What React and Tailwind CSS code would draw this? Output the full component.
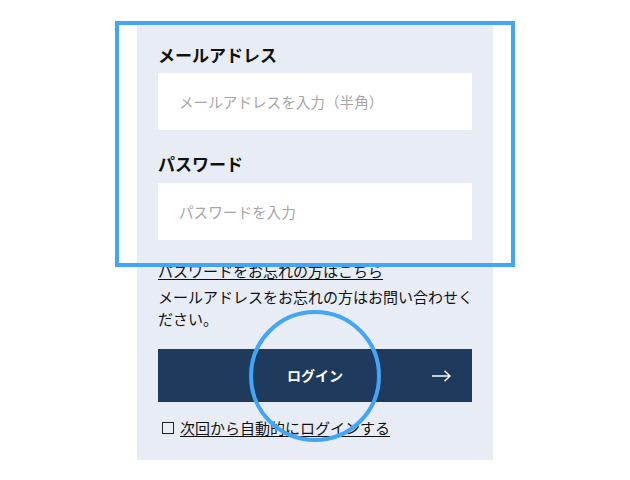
import React from "react";

export default function App() {
  const font = { fontFamily: '"Noto Sans CJK JP", "Noto Sans", sans-serif' };
  return (
    <div className="relative w-[630px] h-[480px] bg-white overflow-hidden text-[#111]" style={font}>
      <div className="ml-[137px] mt-[21px] w-[356px] h-[439px] bg-[#e8ecf5] px-[21px] pt-[22px] flex flex-col">
        <div className="text-[17px] leading-[24px] font-bold">メールアドレス</div>
        <div className="mt-[6px] h-[57px] bg-white flex items-center px-[21px] text-[14.6px] text-[#a6a6a6]">
          メールアドレスを入力（半角）
        </div>
        <div className="mt-[22px] text-[17px] leading-[24px] font-bold">パスワード</div>
        <div className="mt-[7px] h-[57px] bg-white flex items-center px-[21px] text-[14.6px] text-[#a6a6a6]">
          パスワードを入力
        </div>
        <div className="mt-[20px] text-[15px] leading-[22px] underline underline-offset-2 whitespace-nowrap">
          パスワードをお忘れの方はこちら
        </div>
        <div className="mt-[4px] text-[15px] leading-[22px] whitespace-nowrap">
          メールアドレスをお忘れの方はお問い合わせく
          <br />
          ださい。
        </div>
        <div className="mt-[19px] h-[53px] bg-[#1e3a5c] relative flex items-center justify-center">
          <span className="text-white font-bold text-[14px]">ログイン</span>
          <svg className="absolute right-[21px] top-1/2 -translate-y-1/2" width="19" height="12" viewBox="0 0 19 12" fill="none">
            <path d="M0 6H18M12.5 0.8L18 6L12.5 11.2" stroke="white" strokeWidth="1.5" />
          </svg>
        </div>
        <div className="mt-[15px] flex items-center gap-[6px] pl-[4px] text-[15px] leading-[22px]">
          <div className="w-[12px] h-[12px] border-[1.5px] border-[#222]" />
          <span className="underline underline-offset-2">次回から自動的にログインする</span>
        </div>
      </div>
      <div className="absolute left-[115px] top-[21px] w-[400px] h-[246px] border-4 border-[#42a5f5]" />
      <div className="absolute left-[249px] top-[310px] w-[132px] h-[132px] rounded-full border-4 border-[#42a5f5]" />
    </div>
  );
}
